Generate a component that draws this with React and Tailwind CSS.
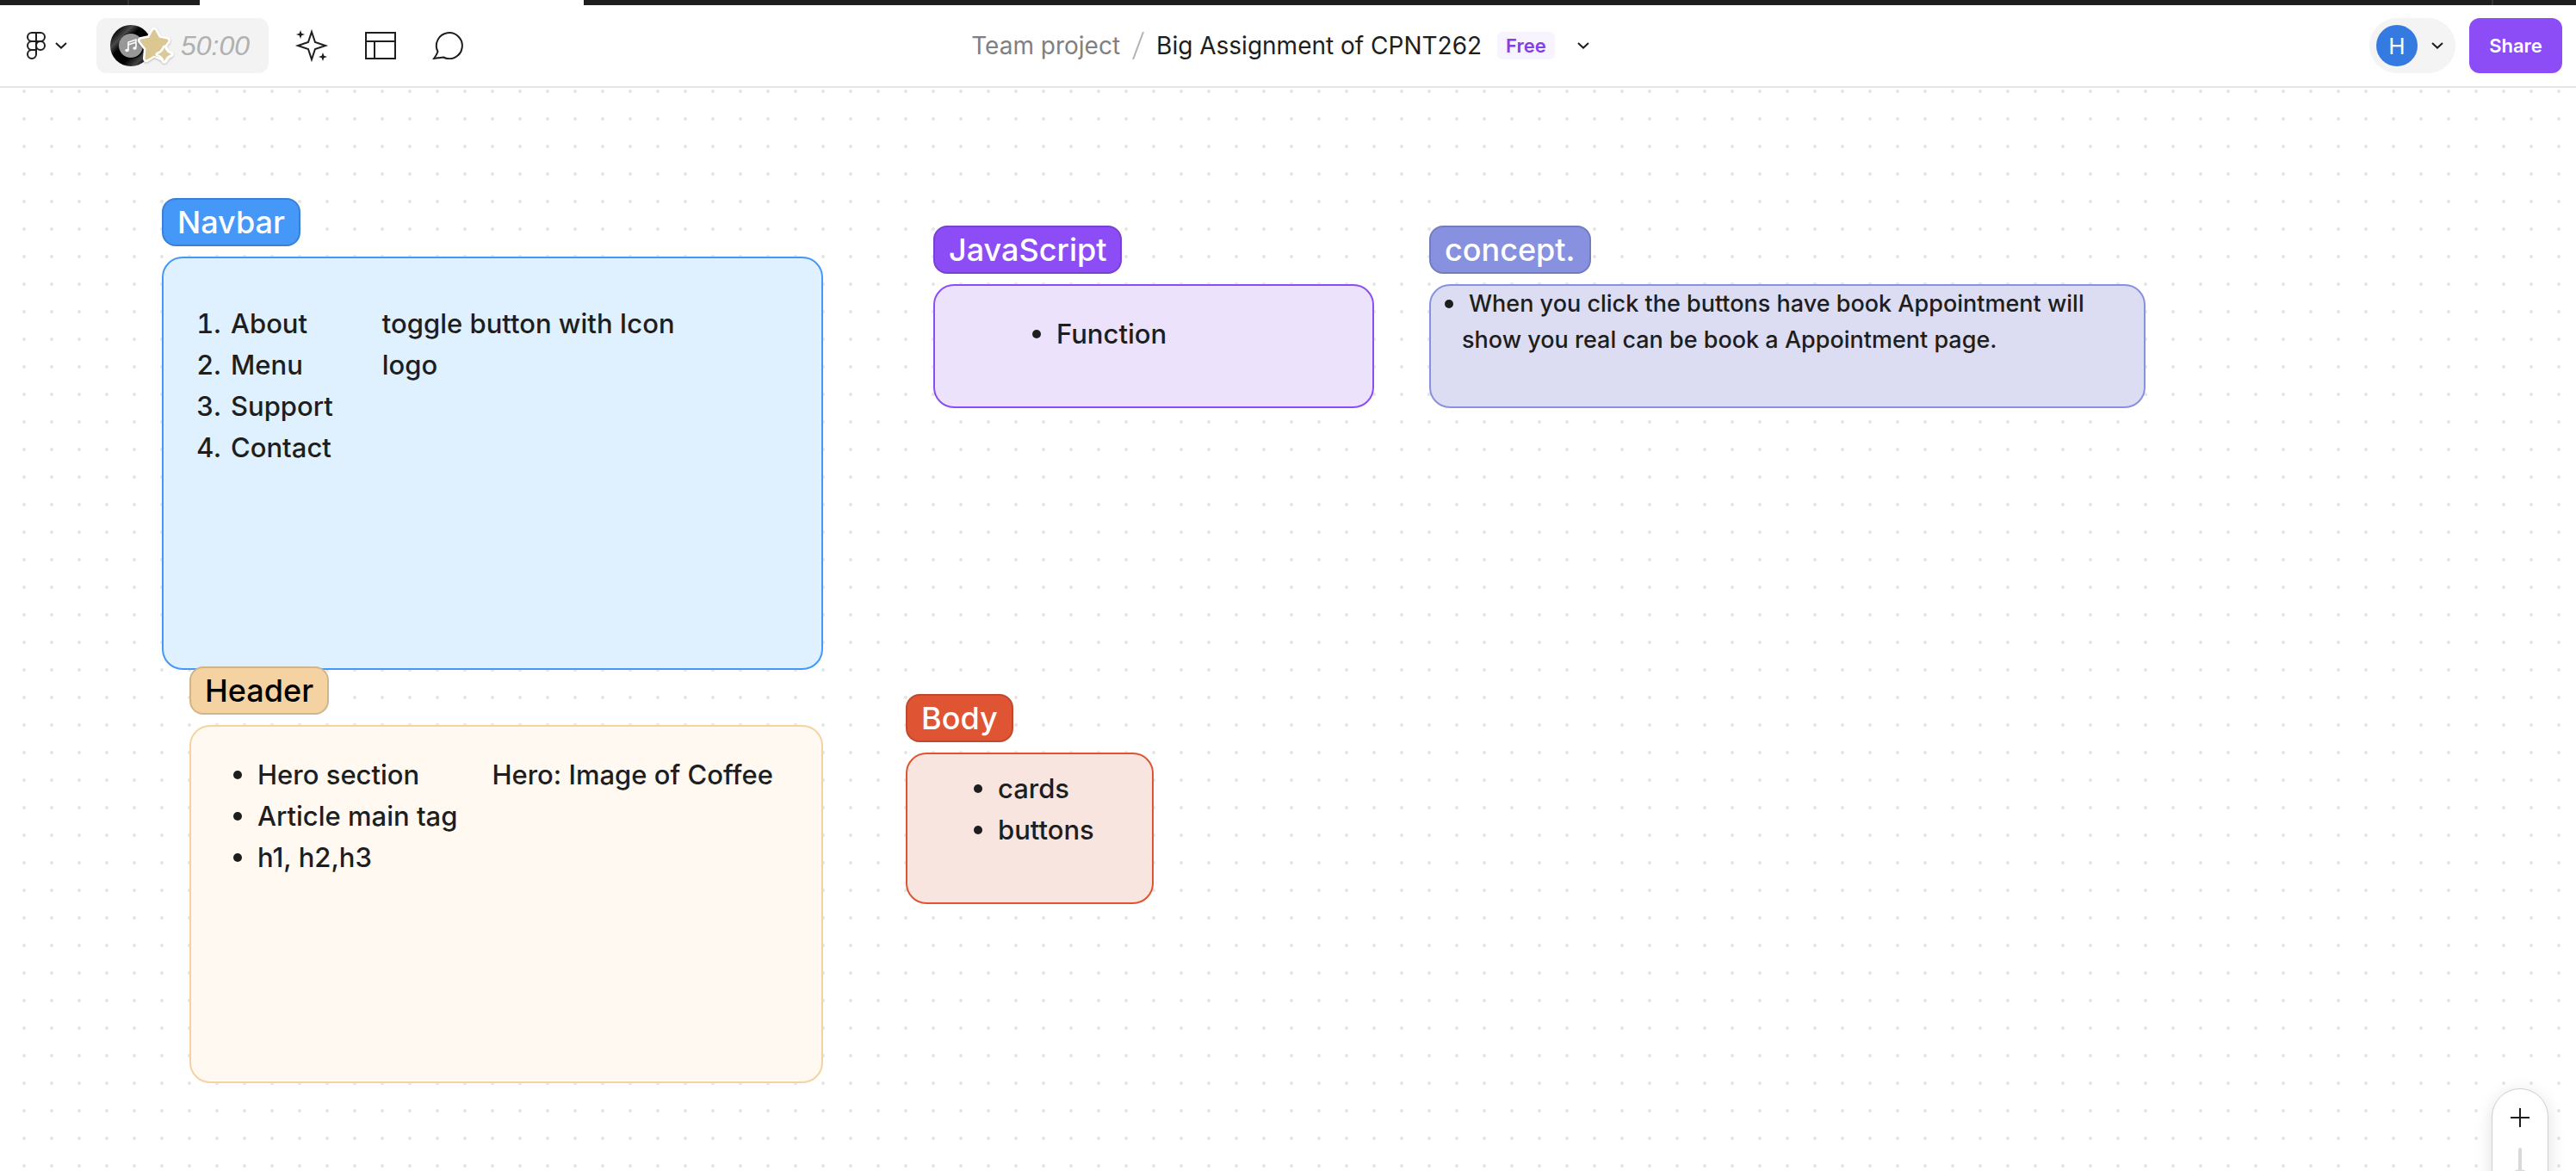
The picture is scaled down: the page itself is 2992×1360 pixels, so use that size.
import React from "react";

const FigmaMenuIcon = () => (
  <svg viewBox="0 0 24 34" className="h-[34px] w-6" fill="none" stroke="#1e1e1e" strokeWidth="2">
    <path d="M12 2H7a5 5 0 0 0 0 10h5zM12 2h5a5 5 0 0 1 0 10h-5zM12 12H7a5 5 0 0 0 0 10h5zM12 22H7a5 5 0 1 0 5 5z" />
    <circle cx="17" cy="17" r="5" />
  </svg>
);

const Chevron = () => (
  <svg viewBox="0 0 14 8" className="h-2 w-[14px]" fill="none" stroke="#1e1e1e" strokeWidth="2">
    <path d="M1 1l6 5.6L13 1" />
  </svg>
);

const TimerArt = () => (
  <svg viewBox="0 0 78 56" className="h-14 w-[78px]">
    <defs>
      <linearGradient id="vinyl" x1="0" y1="0" x2="1" y2="1">
        <stop offset="0" stopColor="#222" />
        <stop offset="0.12" stopColor="#000" />
        <stop offset="0.28" stopColor="#4a4a4a" />
        <stop offset="0.4" stopColor="#000" />
        <stop offset="0.62" stopColor="#000" />
        <stop offset="0.78" stopColor="#444" />
        <stop offset="0.9" stopColor="#000" />
      </linearGradient>
      <filter id="shade" x="-20%" y="-20%" width="140%" height="150%">
        <feDropShadow dx="0" dy="1" stdDeviation="1" floodOpacity="0.3" />
      </filter>
    </defs>
    <circle cx="24" cy="28" r="24" fill="url(#vinyl)" />
    <circle cx="25" cy="28" r="15" fill="#000" />
    <circle cx="24" cy="28" r="14" fill="#979797" />
    <path d="M21 33v-9l9-3v9M21 27l9-3" fill="none" stroke="#fff" strokeWidth="1.6" />
    <ellipse cx="19.5" cy="33.5" rx="2.2" ry="1.7" fill="#fff" />
    <ellipse cx="28.5" cy="31" rx="2.2" ry="1.7" fill="#fff" />
    <g filter="url(#shade)" strokeLinejoin="round">
      <path d="M51 11L56 20L66 22L60 30L62 42L51 37L42 43L43 31L36 22L46 20Z" fill="#fff" stroke="#fff" strokeWidth="8" />
      <path d="M63 31Q65 36 70 38Q65 40 63 45Q61 40 56 38Q61 36 63 31Z" fill="#fff" stroke="#fff" strokeWidth="7" />
    </g>
    <path d="M51 11L56 20L66 22L60 30L62 42L51 38L42 43L43 31L36 22L46 20Z" fill="#dac792" stroke="#dac792" strokeWidth="3" strokeLinejoin="round" />
    <path
      d="M63 30Q65 36 71 38Q65 40 63 46Q61 40 55 38Q61 36 63 30Z"
      fill="#d9c99d"
      stroke="#fff"
      strokeWidth="5"
      strokeLinejoin="round"
      paintOrder="stroke"
    />
  </svg>
);

const SparkleIcon = () => (
  <svg viewBox="0 0 40 40" className="h-10 w-10" fill="none" stroke="#1e1e1e" strokeWidth="2">
    <path d="M20 4L24 16L36 20L24 24L20 36L16 24L4 20L16 16Z" />
    <path
      d="M7 2L8.3 5.7L12 7L8.3 8.3L7 12L5.7 8.3L2 7L5.7 5.7ZM33 28L34.3 31.7L38 33L34.3 34.3L33 38L31.7 34.3L28 33L31.7 31.7Z"
      fill="#1e1e1e"
      stroke="none"
    />
  </svg>
);

const TemplateIcon = () => (
  <svg viewBox="0 0 36 32" className="h-8 w-9" fill="none" stroke="#1e1e1e" strokeWidth="2">
    <path d="M1 1h34v30H1zM1 11h34M11 11v20" />
  </svg>
);

const CommentIcon = () => (
  <svg viewBox="0 0 36 32" className="h-8 w-9" fill="none" stroke="#1e1e1e" strokeWidth="2">
    <path d="M6.5 23A15 15 0 1 1 13 29.5Q8 30 2 31Q5 27 6.5 23Z" />
  </svg>
);

function Section({ place, tag, box, title, children }) {
  return (
    <section className={"absolute flex flex-col items-start gap-3 " + place}>
      <h2 className={"flex h-14 items-center rounded-2xl border-2 px-4 text-[36px] font-medium " + tag}>{title}</h2>
      <div className={"w-full rounded-3xl border-2 text-[31px] leading-[48px] font-medium text-[#1e1e1e] " + box}>{children}</div>
    </section>
  );
}

function Bullet({ children }) {
  return (
    <li className="flex items-center gap-[18px] whitespace-nowrap">
      <span className="h-[10px] w-[10px] rounded-full bg-[#1e1e1e]" />
      {children}
    </li>
  );
}

export default function App() {
  return (
    <div className="flex h-screen flex-col overflow-hidden bg-white font-['Inter',sans-serif] text-[#1e1e1e]">
      <div className="flex h-[6px] shrink-0 bg-[#1e1e1e]">
        <div className="w-[150px] border-r-2 border-[#333]" />
        <div className="w-[82px]" />
        <div className="w-[446px] bg-white" />
        <div className="flex-1 border-r-2 border-[#333]" />
        <div className="w-24" />
      </div>

      <header className="flex h-24 shrink-0 items-center justify-between border-b-2 border-[#e5e5e5] bg-white pr-4 pl-[30px]">
        <div className="flex flex-1 items-center">
          <button aria-label="Main menu" className="flex items-center gap-[10px]">
            <FigmaMenuIcon />
            <Chevron />
          </button>
          <button aria-label="Timer" className="ml-[34px] flex h-16 w-[200px] items-center gap-1 rounded-xl bg-[#f3f3f3] pl-4">
            <TimerArt />
            <span className="font-['Liberation_Sans',sans-serif] text-[32px] leading-none text-[#b0b0b0] italic">50:00</span>
          </button>
          <button aria-label="AI tools" className="ml-[30px]">
            <SparkleIcon />
          </button>
          <button aria-label="Templates" className="ml-[42px]">
            <TemplateIcon />
          </button>
          <button aria-label="Comments" className="ml-[42px]">
            <CommentIcon />
          </button>
        </div>

        <div className="flex items-center pr-8 text-[28px] whitespace-nowrap">
          <a href="#project" className="text-[#808080]">Team project</a>
          <svg viewBox="0 0 14 32" className="mx-[14px] h-8 w-[14px]" fill="none" stroke="#b3b3b3" strokeWidth="2">
            <path d="M1 32L13 0" />
          </svg>
          <h1>Big Assignment of CPNT262</h1>
          <span className="ml-[18px] flex h-8 items-center rounded-md bg-[#f7f3ff] px-[10px] text-[22px] font-semibold text-[#8240e6]">Free</span>
          <button aria-label="File options" className="ml-[26px]">
            <Chevron />
          </button>
        </div>

        <div className="flex flex-1 items-center justify-end gap-4">
          <button aria-label="Account" className="flex h-16 w-[100px] items-center gap-4 rounded-full bg-[#f4f4f4] pl-2">
            <span className="flex h-12 w-12 items-center justify-center rounded-full bg-[#357ae0] text-[26px] text-white">H</span>
            <Chevron />
          </button>
          <button className="h-16 w-[108px] rounded-xl bg-[#8d4df6] text-[22px] font-semibold text-white">Share</button>
        </div>
      </header>

      <main className="relative flex-1 overflow-hidden bg-[radial-gradient(circle,#e5e5e5_1.5px,transparent_2.5px)] bg-[length:32px_32px] bg-[position:12px_-12px]">
        <Section
          title="Navbar"
          place="left-[188px] top-[128px] w-[768px]"
          tag="border-[#3a80d6] bg-[#4597f8] text-white"
          box="flex h-[480px] gap-[57px] border-[#4597f8] bg-[#dff0ff] pt-[52px] pl-[75px]"
        >
          <ol className="list-decimal [&>li]:pl-[3px]">
            <li>About</li>
            <li>Menu</li>
            <li>Support</li>
            <li>Contact</li>
          </ol>
          <p className="whitespace-nowrap">
            toggle button with Icon
            <br />
            logo
          </p>
        </Section>

        <Section
          title="Header"
          place="left-[220px] top-[672px] w-[736px]"
          tag="border-[#d2b48a] bg-[#f5d2a2] text-black"
          box="flex h-[416px] gap-10 border-[#f5d2a2] bg-[#fff9f2] pt-8 pl-[49px]"
        >
          <ul>
            <Bullet>Hero section</Bullet>
            <Bullet>Article main tag</Bullet>
            <Bullet>h1, h2,h3</Bullet>
          </ul>
          <p className="whitespace-nowrap">Hero: Image of Coffee</p>
        </Section>

        <Section
          title="JavaScript"
          place="left-[1084px] top-[160px] w-[512px]"
          tag="border-[#7941d1] bg-[#8d4df6] text-white"
          box="h-[144px] border-[#8d4df6] bg-[#ede2fc] pt-8 pl-[113px]"
        >
          <ul>
            <Bullet>Function</Bullet>
          </ul>
        </Section>

        <Section
          title="concept."
          place="left-[1660px] top-[160px] w-[832px]"
          tag="border-[#737dbe] bg-[#8791df] text-white"
          box="h-[144px] border-[#8791df] bg-[#dcddf2] pl-4"
        >
          <ul className="text-[27px] leading-[42px]">
            <Bullet>When you click the buttons have book Appointment will</Bullet>
            <li className="pl-5">show you real can be book a Appointment page.</li>
          </ul>
        </Section>

        <Section
          title="Body"
          place="left-[1052px] top-[704px] w-[288px]"
          tag="border-[#bf492d] bg-[#df5433] text-white"
          box="h-[176px] border-[#df5433] bg-[#f8e5e0] pt-4 pl-[77px]"
        >
          <ul>
            <Bullet>cards</Bullet>
            <Bullet>buttons</Bullet>
          </ul>
        </Section>

        <div className="absolute -bottom-48 right-8 flex h-[288px] w-[66px] flex-col items-center rounded-full border border-[#cfcfcf] bg-white pt-[22px] shadow-[0_4px_20px_rgba(0,0,0,0.12)]">
          <button aria-label="Zoom in">
            <svg viewBox="0 0 22 22" className="h-[22px] w-[22px]" stroke="#1e1e1e" strokeWidth="2">
              <path d="M11 0v22M0 11h22" />
            </svg>
          </button>
          <div className="mt-6 h-[25px] w-1 rounded-t-full bg-[#d9d9d9]" />
          <div className="h-6 w-6 rounded-full bg-[#d9d9d9]" />
        </div>
      </main>
    </div>
  );
}
